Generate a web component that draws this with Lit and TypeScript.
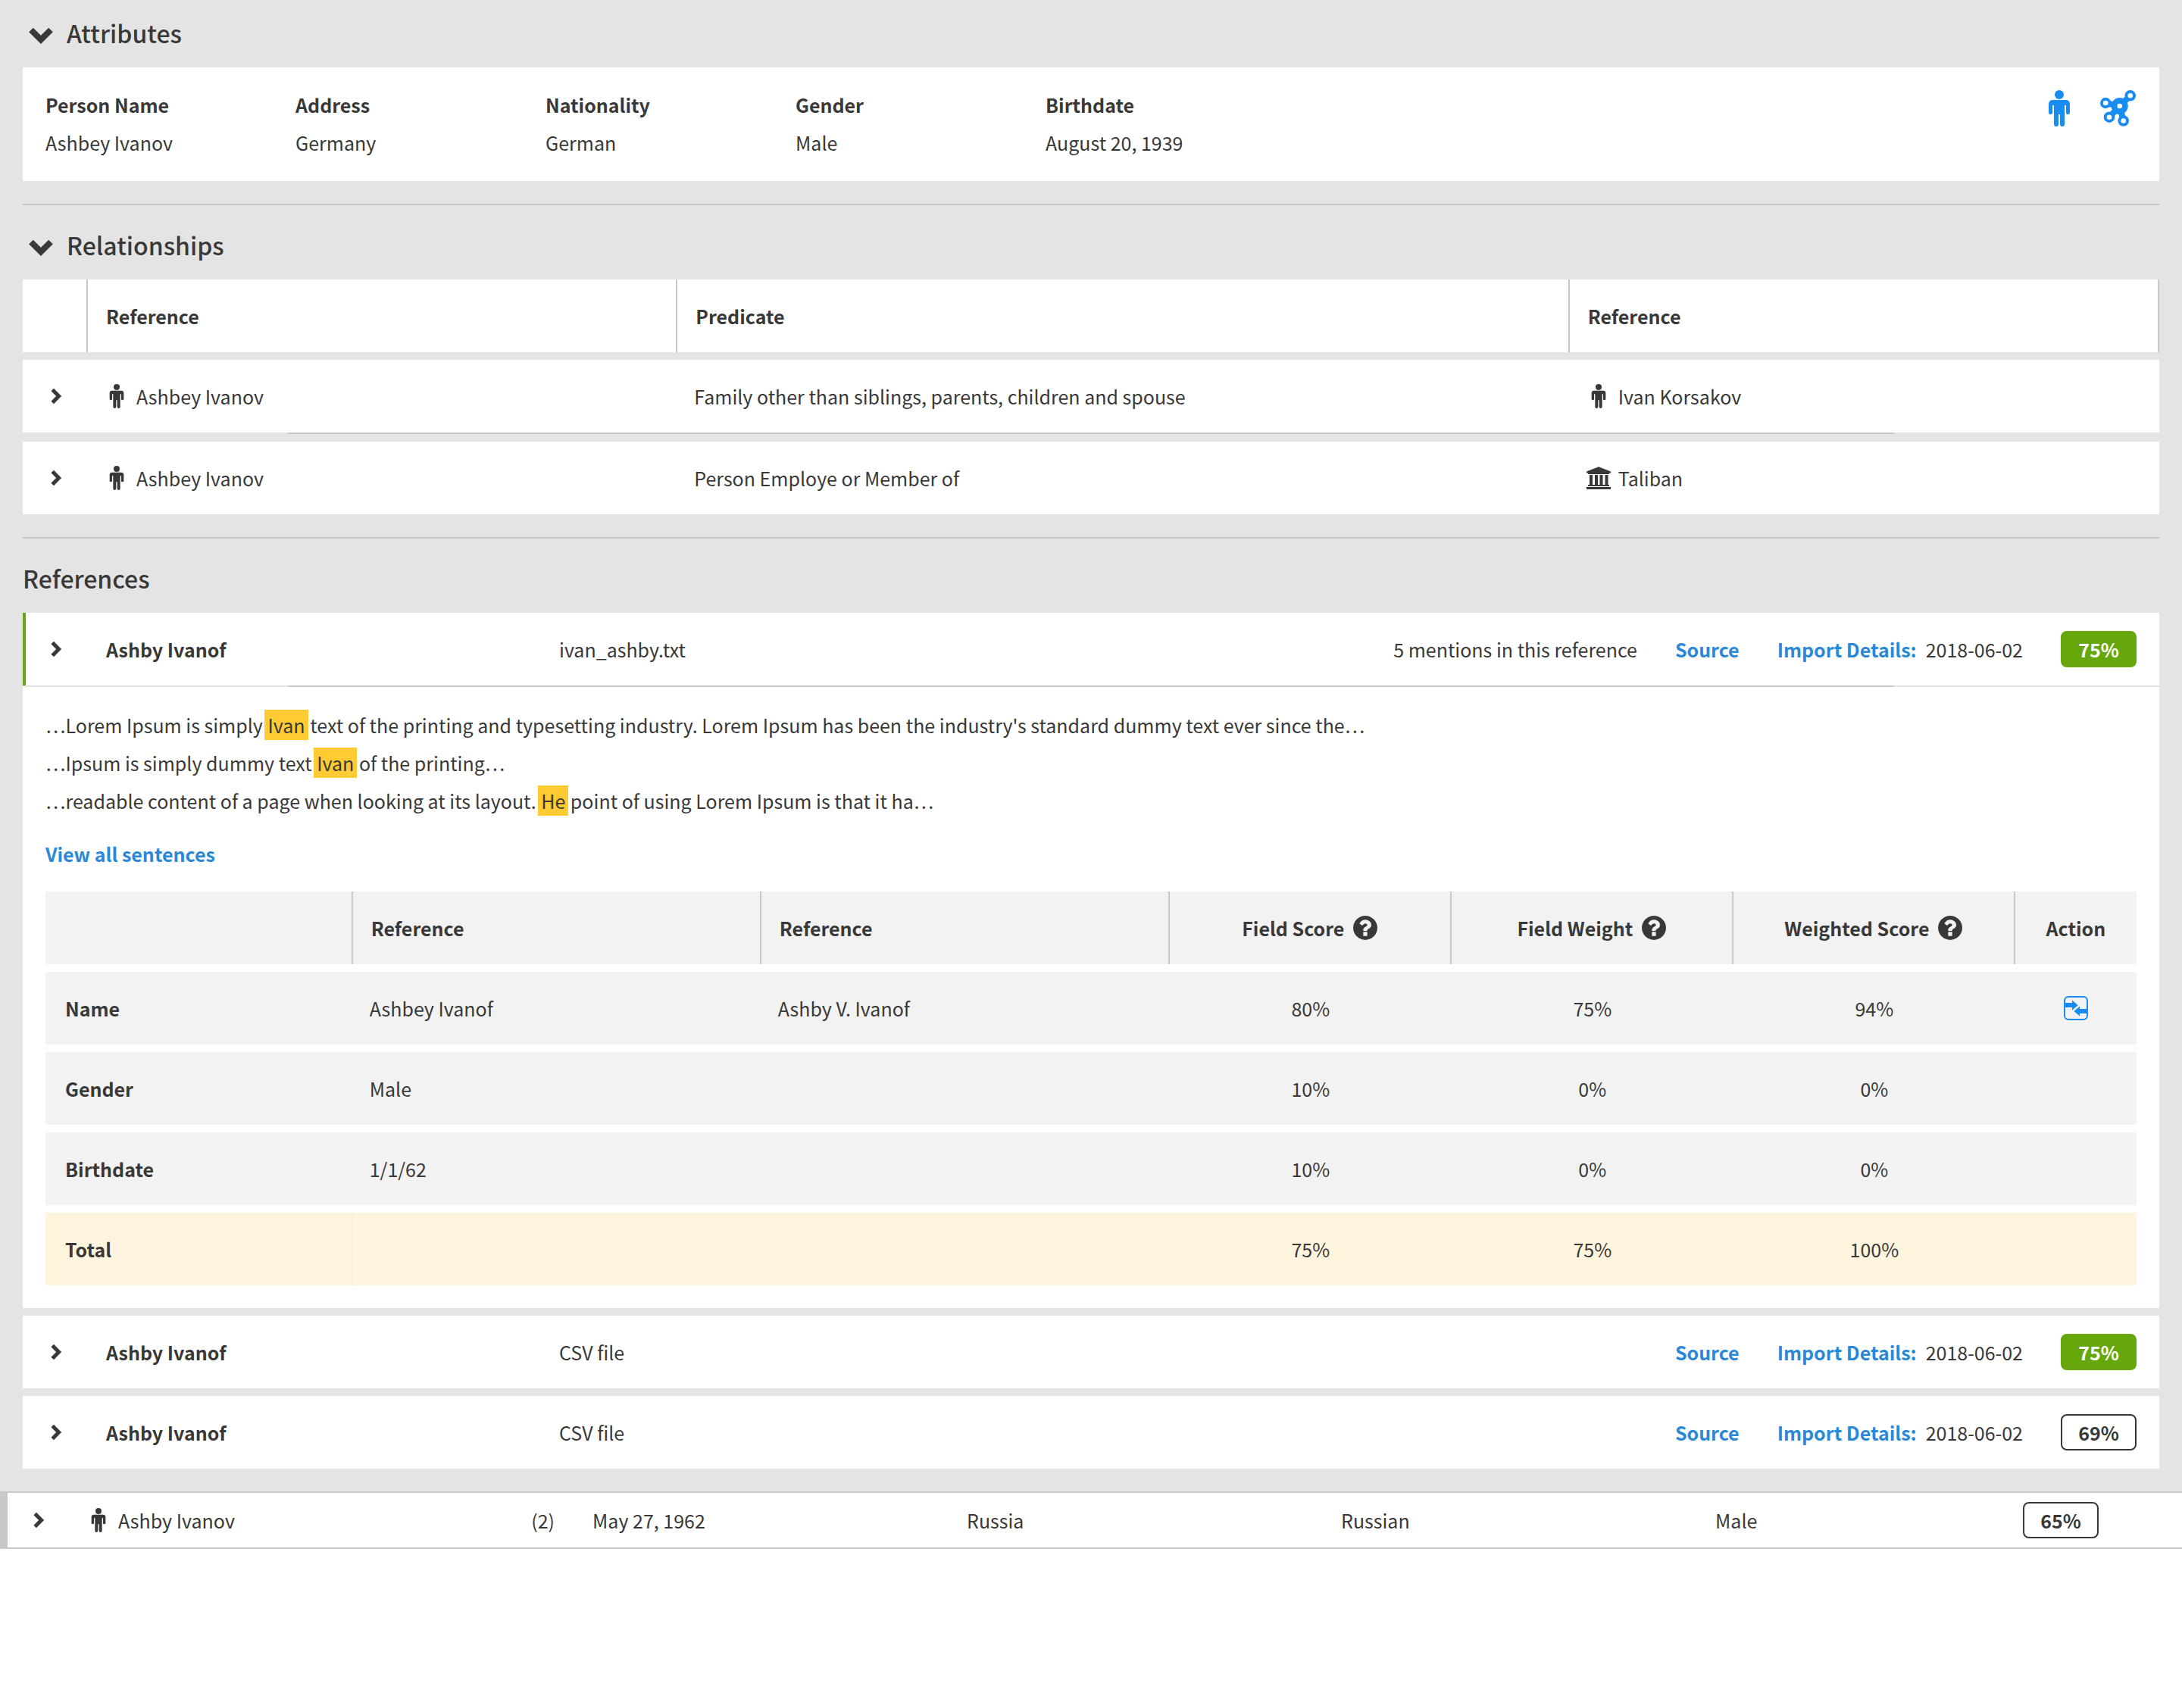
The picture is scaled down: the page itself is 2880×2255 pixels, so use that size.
import { LitElement, html, css, svg, nothing } from "lit";
import { customElement } from "lit/decorators.js";
import { classMap } from "lit/directives/class-map.js";

const personShape = svg`
  <circle cx="14" cy="6" r="6"></circle>
  <path d="M5 13h18a5 5 0 0 1 5 5v11.500a2.500 2.500 0 0 1-5 0V20h-2v25a3 3 0 0 1-6 0V32h-2v13a3 3 0 0 1-6 0V20H5v9.500a2.500 2.500 0 0 1-5 0V18a5 5 0 0 1 5-5z"></path>`;

const personIcon = (cls: string) =>
  html`<svg class=${cls} viewBox="-10 0 48 48" fill="currentColor" aria-hidden="true">${personShape}</svg>`;

const networkIcon = html`<svg class="icon-lg" viewBox="0 0 48 48" aria-hidden="true">
  <g stroke="currentColor" stroke-width="8">
    <path d="M25.700 21L39.700 7.300M25.700 21L7 17M25.700 21L12 35.700M25.700 21L30.700 40.300"></path>
  </g>
  <g fill="currentColor">
    <circle cx="25.700" cy="21" r="11"></circle>
    <circle cx="39.700" cy="7.300" r="7.300"></circle>
    <circle cx="7.200" cy="17" r="7.200"></circle>
    <circle cx="12" cy="35.700" r="7.300"></circle>
    <circle cx="30.700" cy="40.500" r="7.300"></circle>
  </g>
  <g fill="#fff">
    <circle cx="25.700" cy="21" r="3.300"></circle>
    <circle cx="39.700" cy="7.300" r="3.300"></circle>
    <circle cx="7.200" cy="17" r="3.300"></circle>
    <circle cx="12" cy="35.700" r="3.300"></circle>
    <circle cx="30.700" cy="40.500" r="3.300"></circle>
  </g>
</svg>`;

const bankIcon = html`<svg class="icon" viewBox="0 0 32 32" fill="currentColor" aria-hidden="true">
  <path d="M16 1.300L32 7.500V9.500H30V11H2V9.500H0V7.500z"></path>
  <path d="M4 12h4v13h3V12h4v13h2.500V12h4v13h3V12h4v13h1.500v2H2v-2h2z"></path>
  <path d="M0 28h32v3H0z"></path>
</svg>`;

const chevronRight = html`<svg class="icon" viewBox="0 0 32 32" fill="none" stroke="currentColor" stroke-width="5" aria-hidden="true">
  <path d="M12.200 7.500L20.600 16l-8.400 8.500"></path>
</svg>`;

const chevronDown = html`<svg class="icon-lg" viewBox="0 0 48 48" fill="none" stroke="currentColor" stroke-width="8" aria-hidden="true">
  <path d="M11 20.500L24 33.300L37 20.500"></path>
</svg>`;

const helpIcon = html`<svg class="icon" viewBox="128 128 1536 1536" fill="currentColor" aria-hidden="true">
  <path d="M1024 1376v-192q0-14-9-23t-23-9h-192q-14 0-23 9t-9 23v192q0 14 9 23t23 9h192q14 0 23-9t9-23zm256-672q0-88-55.500-163t-138.500-116-170-41q-243 0-371 213-15 24 8 42l132 100q7 6 19 6 16 0 25-12 53-68 86-92 34-24 86-24 48 0 85.500 26t37.500 59q0 38-20 61t-68 45q-63 28-115.500 86.500t-52.500 125.500v36q0 14 9 23t23 9h192q14 0 23-9t9-23q0-19 21.500-49.500t54.500-49.500q32-18 49-28.500t46-35 44.500-48 28-60.500 12.500-81zm384 192q0 209-103 385.500t-279.500 279.500-385.500 103-385.500-103-279.500-279.500-103-385.500 103-385.500 279.500-279.500 385.500-103 385.500 103 279.500 279.500 103 385.500z"></path>
</svg>`;

const mergeIcon = html`<svg class="icon" viewBox="0 0 32 32" aria-hidden="true">
  <rect x="1" y="1" width="30" height="30" rx="5" fill="none" stroke="currentColor" stroke-width="2"></rect>
  <path fill="currentColor" d="M2 9h9V5.500l7.700 6.700L11 18.800V15H2zM30 17h-9v-3.300L13.300 20l7.700 6.500V23h9z"></path>
</svg>`;

type Entity = { kind: "person" | "group"; name: string };
type Reference = { name: string; file: string; date: string; score: number; mentions?: string; open?: boolean };

const attributes = [
  ["Person Name", "Ashbey Ivanov"],
  ["Address", "Germany"],
  ["Nationality", "German"],
  ["Gender", "Male"],
  ["Birthdate", "August 20, 1939"],
];

const relationships: { from: Entity; predicate: string; to: Entity }[] = [
  {
    from: { kind: "person", name: "Ashbey Ivanov" },
    predicate: "Family other than siblings, parents, children and spouse",
    to: { kind: "person", name: "Ivan Korsakov" },
  },
  {
    from: { kind: "person", name: "Ashbey Ivanov" },
    predicate: "Person Employe or Member of",
    to: { kind: "group", name: "Taliban" },
  },
];

const references: Reference[] = [
  { name: "Ashby Ivanof", file: "ivan_ashby.txt", date: "2018-06-02", score: 75, mentions: "5 mentions in this reference", open: true },
  { name: "Ashby Ivanof", file: "CSV file", date: "2018-06-02", score: 75 },
  { name: "Ashby Ivanof", file: "CSV file", date: "2018-06-02", score: 69 },
];

const sentences = [
  ["…Lorem Ipsum is simply ", "Ivan", " text of the printing and typesetting industry. Lorem Ipsum has been the industry's standard dummy text ever since the…"],
  ["…Ipsum is simply dummy text ", "Ivan", " of the printing…"],
  ["…readable content of a page when looking at its layout. ", "He", " point of using Lorem Ipsum is that it ha…"],
];

const scores = [
  { label: "Name", a: "Ashbey Ivanof", b: "Ashby V. Ivanof", score: "80%", weight: "75%", weighted: "94%", merge: true },
  { label: "Gender", a: "Male", b: "", score: "10%", weight: "0%", weighted: "0%" },
  { label: "Birthdate", a: "1/1/62", b: "", score: "10%", weight: "0%", weighted: "0%" },
  { label: "Total", a: "", b: "", score: "75%", weight: "75%", weighted: "100%", total: true },
];

@customElement("app-root")
export class AppRoot extends LitElement {
  static styles = css`
    :host {
      display: block;
      font-family: "Noto Sans CJK SC", sans-serif;
      font-size: 25px;
      line-height: 50px;
      color: #383838;
      background: #fff;
    }
    * { box-sizing: border-box; }
    h2, p, dl, dd { margin: 0; }
    svg { display: block; flex: none; }
    .icon { width: 32px; height: 32px; }
    .icon-lg { width: 48px; height: 48px; }
    button {
      display: flex;
      align-items: center;
      justify-content: center;
      padding: 0;
      border: 0;
      background: none;
      color: inherit;
      font: inherit;
      cursor: pointer;
    }
    a { color: #2a88d8; font-weight: 700; text-decoration: none; }

    .detail { background: #e4e4e4; padding: 0 30px 30px; }
    .section { padding: 30px 0; border-bottom: 2px solid #c8c8c8; }
    .section.first { padding-top: 21px; }
    .section.last { padding-bottom: 0; border-bottom: 0; }
    .heading {
      display: flex;
      align-items: center;
      gap: 10px;
      height: 44px;
      margin-bottom: 24px;
      font-size: 32px;
      font-weight: 500;
      line-height: 44px;
    }

    .attributes { display: flex; background: #fff; padding: 24px 30px 26px; }
    .attribute-list { display: flex; flex: 1; }
    .attribute { width: 330px; }
    .attribute dt { font-weight: 700; }
    .attribute-tools { display: flex; align-items: flex-start; gap: 30px; padding-top: 6px; color: #188cf0; }

    table { width: 100%; table-layout: fixed; border-collapse: separate; border-spacing: 0 10px; margin: -10px 0; }
    th, td { height: 96px; padding: 0; text-align: left; vertical-align: middle; }
    th { padding-left: 24px; font-weight: 700; }
    td { padding-left: 22px; font-weight: 400; }
    tbody th { padding-left: 26px; }
    th.center, td.center { padding: 0; text-align: center; }
    thead th { border-right: 2px solid #c8c8c8; }
    .center-content { display: flex; align-items: center; justify-content: center; gap: 12px; }

    .relations th, .relations td { background: #fff; background-clip: padding-box; }
    .relations td.toggle { padding: 0; }
    .relations thead th { background-clip: border-box; }
    .relations .col-toggle { width: 86px; }
    .relations .col-entity { width: 27.600%; }
    .relations .divided { background: linear-gradient(#c8c8c8, #c8c8c8) center bottom / calc(100% - 700px) 2px no-repeat; }
    .relations .divided td { height: 98px; border-bottom: 2px solid transparent; }
    .entity { display: flex; align-items: center; gap: 10px; }
    .toggle-button { width: 86px; height: 96px; }

    .reference-list { display: flex; flex-direction: column; gap: 10px; }
    .reference { background: #fff; }
    .reference-head { display: flex; align-items: center; height: 96px; padding-right: 30px; }
    .reference-head.open {
      height: 98px;
      border-bottom: 2px solid transparent;
      background:
        linear-gradient(#66a80c, #66a80c) left top / 4px 96px no-repeat border-box,
        linear-gradient(#c8c8c8, #c8c8c8) center bottom / calc(100% - 700px) 2px no-repeat border-box,
        linear-gradient(#e4e4e4, #e4e4e4) left bottom / 100% 2px no-repeat border-box;
    }
    .reference-name { width: 598px; margin-left: 24px; font-weight: 700; }
    .reference-file { flex: 1; }
    .reference-meta { display: flex; align-items: center; gap: 50px; }
    .import { display: flex; gap: 12px; }
    .badge {
      width: 100px;
      height: 48px;
      border: 2px solid #383838;
      border-radius: 8px;
      font-weight: 700;
      line-height: 44px;
      text-align: center;
    }
    .badge.high { border-color: #66a80c; background: #66a80c; color: #fff; }

    .reference-body { padding: 25px 30px 30px; }
    mark { margin: 0 -3px; padding: 2px 4px; background: #fecb33; color: inherit; }
    .view-all { margin: 20px 0 25px; }
    .scores th, .scores td { background: #f2f2f2; }
    .scores .col-label { width: 14.700%; }
    .scores .col-value { width: 19.530%; }
    .scores .col-score { width: 13.480%; }
    .scores thead th:last-child { border-right: 0; }
    .scores .total th, .scores .total td { background: #fff4dd; }
    .scores .total th { border-right: 2px solid #f8f1e0; }
    .action { color: #188cf0; }

    .result {
      display: flex;
      align-items: center;
      height: 76px;
      padding-right: 110px;
      border: solid #c8c8c8;
      border-width: 2px 0 2px 10px;
    }
    .result .toggle-button { width: 80px; height: 72px; margin-right: 24px; }
    .result-cells { display: grid; grid-template-columns: 668fr 494fr 494fr 494fr 406fr auto; flex: 1; align-items: center; }
    .result-name { display: flex; align-items: center; justify-content: space-between; padding-right: 50px; }
    .result .badge { grid-column: 6; }
  `;

  private entity(e: Entity) {
    return html`<div class="entity">${e.kind === "person" ? personIcon("icon") : bankIcon}<span>${e.name}</span></div>`;
  }

  private badge(score: number) {
    return html`<div class=${classMap({ badge: true, high: score >= 70 })}>${score}%</div>`;
  }

  private helpHeader(label: string) {
    return html`<th class="center" scope="col">
      <div class="center-content"><span>${label}</span><button aria-label=${`About ${label}`}>${helpIcon}</button></div>
    </th>`;
  }

  private scoreTable() {
    return html`<table class="scores">
      <colgroup>
        <col class="col-label" /><col class="col-value" /><col class="col-value" />
        <col class="col-score" /><col class="col-score" /><col class="col-score" /><col />
      </colgroup>
      <thead>
        <tr>
          <th></th>
          <th scope="col">Reference</th>
          <th scope="col">Reference</th>
          ${["Field Score", "Field Weight", "Weighted Score"].map((l) => this.helpHeader(l))}
          <th class="center" scope="col">Action</th>
        </tr>
      </thead>
      <tbody>
        ${scores.map(
          (s) => html`<tr class=${classMap({ total: !!s.total })}>
            <th scope="row">${s.label}</th>
            <td>${s.a}</td>
            <td>${s.b}</td>
            <td class="center">${s.score}</td>
            <td class="center">${s.weight}</td>
            <td class="center">${s.weighted}</td>
            <td class="center">
              ${s.merge ? html`<div class="center-content action"><button aria-label="Merge">${mergeIcon}</button></div>` : nothing}
            </td>
          </tr>`,
        )}
      </tbody>
    </table>`;
  }

  private reference(r: Reference) {
    return html`<article class="reference">
      <div class=${classMap({ "reference-head": true, open: !!r.open })}>
        <button class="toggle-button" aria-label="Toggle reference">${chevronRight}</button>
        <div class="reference-name">${r.name}</div>
        <div class="reference-file">${r.file}</div>
        <div class="reference-meta">
          ${r.mentions ? html`<span>${r.mentions}</span>` : nothing}
          <a href="#source">Source</a>
          <div class="import"><a href="#import">Import Details:</a><span>${r.date}</span></div>
          ${this.badge(r.score)}
        </div>
      </div>
      ${r.open
        ? html`<div class="reference-body">
            ${sentences.map(([before, hit, after]) => html`<p>${before}<mark>${hit}</mark>${after}</p>`)}
            <p class="view-all"><a href="#sentences">View all sentences</a></p>
            ${this.scoreTable()}
          </div>`
        : nothing}
    </article>`;
  }

  render() {
    return html`
      <main class="detail">
        <section class="section first">
          <h2 class="heading"><button aria-label="Collapse attributes">${chevronDown}</button>Attributes</h2>
          <div class="attributes">
            <dl class="attribute-list">
              ${attributes.map(([k, v]) => html`<div class="attribute"><dt>${k}</dt><dd>${v}</dd></div>`)}
            </dl>
            <div class="attribute-tools">
              <button aria-label="Person">${personIcon("icon-lg")}</button>
              <button aria-label="Network">${networkIcon}</button>
            </div>
          </div>
        </section>

        <section class="section">
          <h2 class="heading"><button aria-label="Collapse relationships">${chevronDown}</button>Relationships</h2>
          <table class="relations">
            <colgroup>
              <col class="col-toggle" /><col class="col-entity" /><col /><col class="col-entity" />
            </colgroup>
            <thead>
              <tr><th></th><th scope="col">Reference</th><th scope="col">Predicate</th><th scope="col">Reference</th></tr>
            </thead>
            <tbody>
              ${relationships.map(
                (r, i) => html`<tr class=${classMap({ divided: i < relationships.length - 1 })}>
                  <td class="toggle"><button class="toggle-button" aria-label="Toggle relationship">${chevronRight}</button></td>
                  <td>${this.entity(r.from)}</td>
                  <td>${r.predicate}</td>
                  <td>${this.entity(r.to)}</td>
                </tr>`,
              )}
            </tbody>
          </table>
        </section>

        <section class="section last">
          <h2 class="heading">References</h2>
          <div class="reference-list">${references.map((r) => this.reference(r))}</div>
        </section>
      </main>

      <div class="result">
        <button class="toggle-button" aria-label="Toggle result">${chevronRight}</button>
        <div class="result-cells">
          <div class="result-name">${this.entity({ kind: "person", name: "Ashby Ivanov" })}<span>(2)</span></div>
          <div>May 27, 1962</div>
          <div>Russia</div>
          <div>Russian</div>
          <div>Male</div>
          ${this.badge(65)}
        </div>
      </div>
    `;
  }
}
